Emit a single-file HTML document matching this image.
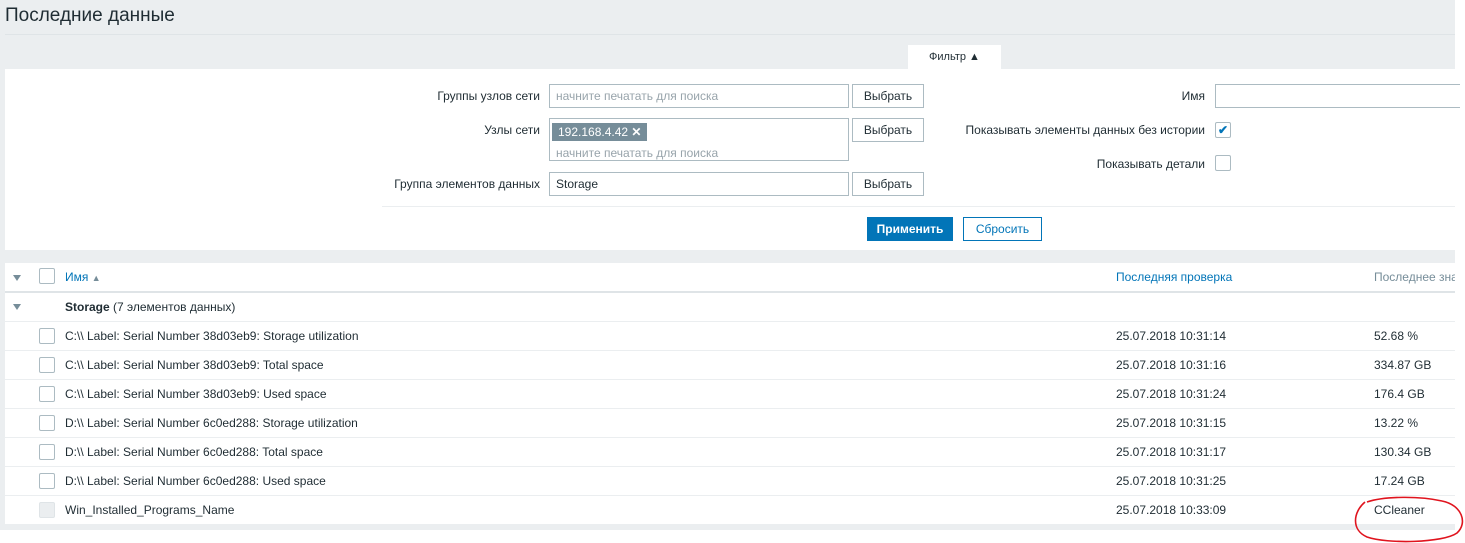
<!DOCTYPE html>
<html><head><meta charset="utf-8"><style>
*{box-sizing:border-box}
body{margin:0;width:1465px;height:543px;background:#fff;font-family:"Liberation Sans",Arial,sans-serif;font-size:12px;color:#1f2c33;position:relative;overflow:hidden}
.bg{position:absolute;left:0;top:0;width:1455px;height:530px;background:#ebeef0}
.abs{position:absolute}
h1{position:absolute;left:5px;top:5px;margin:0;font-size:19px;font-weight:normal;color:#1f2c33}
.lbl{position:absolute;text-align:right;width:200px;line-height:24px}
.inp{position:absolute;border:1px solid #acbbc2;background:#fff;height:24px;line-height:22px;padding-left:6px}
.ph{color:#98a4ab}
.btn{position:absolute;border:1px solid #acbbc2;background:#fff;height:24px;line-height:22px;width:72px;text-align:center}
.cb{position:absolute;width:16px;height:16px;border:1px solid #acbbc2;background:#fff;border-radius:2px}
.row{position:absolute;left:5px;width:1450px;height:29px;border-bottom:1px solid #ebeef0;line-height:28px}
.row span{position:absolute}
.tri{position:absolute;left:8px;width:0;height:0;border-left:4px solid transparent;border-right:4px solid transparent;border-top:6px solid #768d99}
</style></head><body>
<div class="bg"></div>
<h1>Последние данные</h1>
<div class="abs" style="left:5px;top:34px;width:1450px;height:1px;background:#dfe4e7"></div>
<div class="abs" style="left:908px;top:45px;width:93px;height:25px;background:#fff;text-align:center;line-height:25px;font-size:11px">Фильтр ▲</div>
<div class="abs" style="left:5px;top:69px;width:1450px;height:181px;background:#fff"></div>
<div class="lbl" style="left:340px;top:84px">Группы узлов сети</div>
<div class="inp ph" style="left:549px;top:84px;width:300px">начните печатать для поиска</div>
<div class="btn" style="left:852px;top:84px">Выбрать</div>
<div class="lbl" style="left:340px;top:118px">Узлы сети</div>
<div class="inp" style="left:549px;top:118px;width:300px;height:43px;padding:2px 2px"><span style="display:inline-block;background:#768d99;color:#fff;line-height:18px;padding:0 6px;height:18px">192.168.4.42 <b>✕</b></span><div class="ph" style="line-height:20px;padding-left:4px">начните печатать для поиска</div></div>
<div class="btn" style="left:852px;top:118px">Выбрать</div>
<div class="lbl" style="left:340px;top:172px">Группа элементов данных</div>
<div class="inp" style="left:549px;top:172px;width:300px">Storage</div>
<div class="btn" style="left:852px;top:172px">Выбрать</div>
<div class="lbl" style="left:805px;top:84px;width:400px">Имя</div>
<div class="inp" style="left:1215px;top:84px;width:245px;border-right:none"></div>
<div class="lbl" style="left:805px;top:118px;width:400px">Показывать элементы данных без истории</div>
<div class="cb" style="left:1215px;top:122px;color:#0275b8;font-size:12px;line-height:14px;text-align:center;font-weight:bold">✔</div>
<div class="lbl" style="left:805px;top:152px;width:400px">Показывать детали</div>
<div class="cb" style="left:1215px;top:155px"></div>
<div class="abs" style="left:382px;top:206px;width:1073px;height:1px;background:#ebeef0"></div>
<div class="abs" style="left:867px;top:217px;width:86px;height:24px;background:#0275b8;border:1px solid #0275b8;color:#fff;text-align:center;line-height:22px;font-weight:bold;font-size:12px">Применить</div>
<div class="abs" style="left:963px;top:217px;width:79px;height:24px;border:1px solid #0275b8;color:#0275b8;text-align:center;line-height:22px">Сбросить</div>

<div class="abs" style="left:5px;top:263px;width:1450px;height:261px;background:#fff"></div>
<div class="row" style="top:263px;height:30px;border-bottom:2px solid #dfe4e7"><div class="tri" style="top:12px"></div><div class="cb" style="left:34px;top:5px"></div><span style="left:60px;color:#0275b8">Имя <span style="position:static;color:#768d99;font-size:9px">▲</span></span><span style="left:1111px;color:#0275b8">Последняя проверка</span><span style="left:1369px;color:#768d99;white-space:nowrap;width:81px;overflow:hidden">Последнее значение</span></div>
<div class="row" style="top:293px"><div class="tri" style="top:11px"></div><span style="left:60px"><b>Storage</b> (7 элементов данных)</span></div>
<div class="row" style="top:322px"><div class="cb" style="left:34px;top:6px"></div><span style="left:60px">C:\\ Label: Serial Number 38d03eb9: Storage utilization</span><span style="left:1111px">25.07.2018 10:31:14</span><span style="left:1369px">52.68 %</span></div>
<div class="row" style="top:351px"><div class="cb" style="left:34px;top:6px"></div><span style="left:60px">C:\\ Label: Serial Number 38d03eb9: Total space</span><span style="left:1111px">25.07.2018 10:31:16</span><span style="left:1369px">334.87 GB</span></div>
<div class="row" style="top:380px"><div class="cb" style="left:34px;top:6px"></div><span style="left:60px">C:\\ Label: Serial Number 38d03eb9: Used space</span><span style="left:1111px">25.07.2018 10:31:24</span><span style="left:1369px">176.4 GB</span></div>
<div class="row" style="top:409px"><div class="cb" style="left:34px;top:6px"></div><span style="left:60px">D:\\ Label: Serial Number 6c0ed288: Storage utilization</span><span style="left:1111px">25.07.2018 10:31:15</span><span style="left:1369px">13.22 %</span></div>
<div class="row" style="top:438px"><div class="cb" style="left:34px;top:6px"></div><span style="left:60px">D:\\ Label: Serial Number 6c0ed288: Total space</span><span style="left:1111px">25.07.2018 10:31:17</span><span style="left:1369px">130.34 GB</span></div>
<div class="row" style="top:467px"><div class="cb" style="left:34px;top:6px"></div><span style="left:60px">D:\\ Label: Serial Number 6c0ed288: Used space</span><span style="left:1111px">25.07.2018 10:31:25</span><span style="left:1369px">17.24 GB</span></div>
<div class="row" style="top:496px;border-bottom:none"><div class="cb" style="left:34px;top:6px;background:#ebeef0;border-color:#dfe4e7"></div><span style="left:60px">Win_Installed_Programs_Name</span><span style="left:1111px">25.07.2018 10:33:09</span><span style="left:1369px">CCleaner</span></div>
<svg class="abs" style="left:1345px;top:490px" width="120" height="53"><path d="M20 12 C8 22,6 40,22 47 C42 54,98 53,112 43 C123 33,117 15,97 11 C75 6,40 6,22 12" fill="none" stroke="#e0141e" stroke-width="1.6"/></svg>
</body></html>
